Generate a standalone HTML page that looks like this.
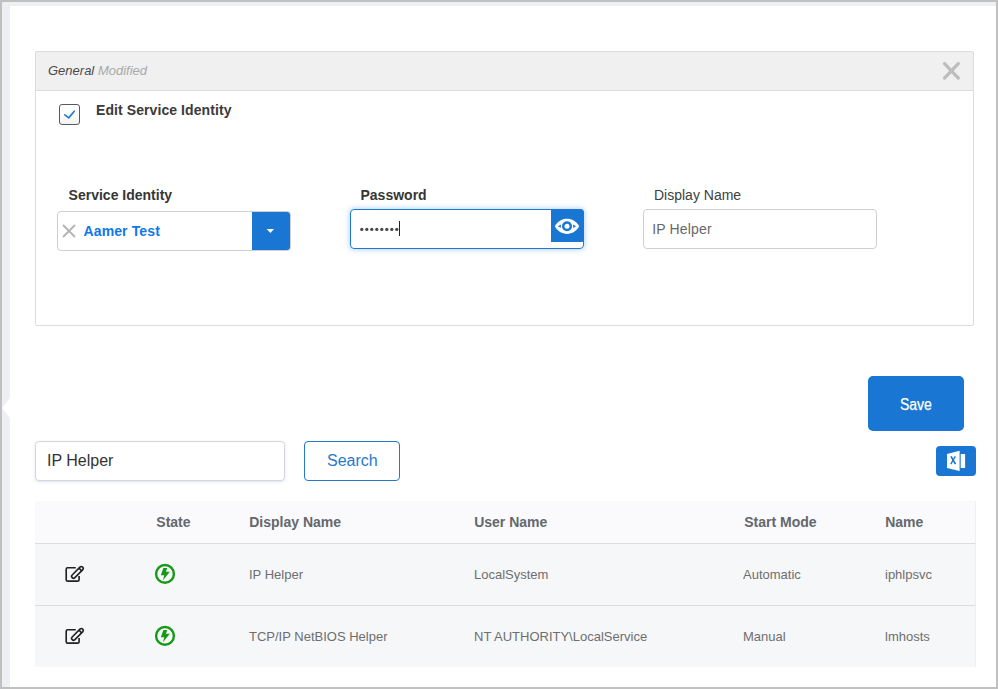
<!DOCTYPE html>
<html><head><meta charset="utf-8">
<style>
*{box-sizing:border-box;margin:0;padding:0}
html,body{width:998px;height:689px;overflow:hidden;background:#fff}
body{font-family:"Liberation Sans",sans-serif;position:relative}
.a{position:absolute}
.t{position:absolute;white-space:nowrap}
#frame{left:0;top:0;width:998px;height:689px;border:2px solid #c0c0c0}
#bandTop{left:2px;top:2px;width:994px;height:4px;background:#eeeff3}
#bandLeft{left:2px;top:2px;width:8px;height:685px;background:#eeeff3}
#panel{left:35px;top:51px;width:939px;height:275px;border:1px solid #dcdcdc;border-radius:2px}
#phead{left:35px;top:51px;width:939px;height:40px;background:#f0f0f0;border:1px solid #dcdcdc;border-radius:2px 2px 0 0}
#chk{left:59px;top:104px;width:21px;height:21px;border:1.3px solid #5a5a5a;border-radius:3px;background:linear-gradient(#fff 40%,#f2f2f2)}
.lbl{font-size:14px;line-height:14px;color:#333}
.inp{border:1px solid #cfcfcf;border-radius:4px;background:#fff}
#sel{left:57px;top:211px;width:234px;height:40px}
#selbtn{left:252px;top:212px;width:38px;height:38px;background:#1976d2;border-radius:0 3px 3px 0}
#pwd{left:350px;top:209px;width:234px;height:40px;border:1px solid #1f78d1;border-radius:4px;box-shadow:0 0 5px 1px rgba(60,140,230,.35)}
#eyebtn{left:551px;top:209px;width:33px;height:33px;background:#1976d2;border-radius:0 4px 2px 0}
#dname{left:643px;top:209px;width:234px;height:40px}
#save{left:868px;top:376px;width:96px;height:55px;background:#1976d2;border-radius:5px}
#xls{left:936px;top:446px;width:40px;height:30px;background:#1976d2;border-radius:4px}
#search{left:35px;top:441px;width:250px;height:40px;border:1px solid #d3d6dc;border-radius:4px;box-shadow:0 1px 3px rgba(120,140,190,.25)}
#sbtn{left:304px;top:441px;width:96px;height:40px;border:1px solid #2479cf;border-radius:4px}
#thead{left:35px;top:501px;width:941px;height:42px;background:#fafafc;border-right:1px solid #efeff2}
#rows{left:35px;top:543px;width:941px;height:124px;background:#f6f7f9;border-right:1px solid #ededf0}
.hl{left:35px;width:940px;height:1px;background:#dcdde0}
.th{font-size:14px;line-height:14px;font-weight:bold;color:#64676d}
.td{font-size:13px;line-height:13px;color:#6e6e6e}
</style></head><body>
<div class="a" id="frame"></div>
<div class="a" id="bandTop"></div>
<div class="a" id="bandLeft"></div>
<svg class="a" style="left:0;top:390px" width="12" height="36"><polygon points="10,8 2,18 10,28" fill="#fff"/></svg>

<div class="a" id="panel"></div>
<div class="a" id="phead"></div>
<div class="t" style="left:48px;top:63.8px;font-size:13px;line-height:13px;font-style:italic;color:#4a4a4a">General <span style="color:#a8a8a8">Modified</span></div>
<svg class="a" style="left:940px;top:59px" width="24" height="24"><path d="M4.5 4.6 L18.3 19.1 M18.3 4.6 L4.5 19.1" stroke="#bdbdbd" stroke-width="3.3" stroke-linecap="round"/></svg>

<div class="a" id="chk"></div>
<svg class="a" style="left:59px;top:104px" width="21" height="21"><path d="M5.9 10.9 L9.7 13.9 L15.3 7.2" fill="none" stroke="#2b7bd0" stroke-width="1.75" stroke-linecap="round" stroke-linejoin="round"/></svg>
<div class="t lbl" style="left:96px;top:103px;font-weight:bold;letter-spacing:0.08px;color:#3a3a3a">Edit Service Identity</div>

<div class="t lbl" style="left:68.6px;top:188px;font-weight:bold;color:#363636">Service Identity</div>
<div class="t lbl" style="left:360.5px;top:188px;font-weight:bold;color:#363636">Password</div>
<div class="t lbl" style="left:654px;top:188px;color:#404040">Display Name</div>

<div class="a inp" id="sel"></div>
<div class="a" id="selbtn"></div>
<svg class="a" style="left:61.5px;top:224.2px" width="14" height="14"><path d="M1 1 L13 13 M13 1 L1 13" stroke="#b3b3b3" stroke-width="1.8"/></svg>
<div class="t" style="left:83.5px;top:224px;font-size:14px;line-height:14px;font-weight:bold;color:#0d78ec;letter-spacing:0.12px">Aamer Test</div>
<svg class="a" style="left:262px;top:225px" width="16" height="12"><polygon points="4.7,4 12.1,4 8.4,7.9" fill="#fff"/></svg>

<div class="a" id="pwd"></div>
<div class="a" id="eyebtn"></div>
<svg class="a" style="left:352px;top:220px" width="48" height="20" fill="#4a4a4a"><circle cx="9.8" cy="9.4" r="1.65"/><circle cx="14.8" cy="9.4" r="1.65"/><circle cx="19.8" cy="9.4" r="1.65"/><circle cx="24.8" cy="9.4" r="1.65"/><circle cx="29.8" cy="9.4" r="1.65"/><circle cx="34.8" cy="9.4" r="1.65"/><circle cx="39.8" cy="9.4" r="1.65"/><circle cx="44.8" cy="9.4" r="1.65"/></svg>
<div class="a" style="left:399px;top:221px;width:1px;height:15px;background:#222"></div>
<svg class="a" style="left:551px;top:209px" width="33" height="33"><path d="M3.8000000000000007 17.3 C9 7.200000000000001 23 7.200000000000001 28.2 17.3 C23 27.4 9 27.4 3.8000000000000007 17.3 Z" fill="#fff"/><path d="M6.800000000000001 17.3 Q16 10.8 25.2 17.3 Q16 23.8 6.800000000000001 17.3 Z" fill="#1976d2"/><circle cx="16" cy="17.3" r="6.2" fill="#fff"/><circle cx="16" cy="17.3" r="5" fill="#1976d2"/><circle cx="16" cy="17.3" r="2.5" fill="#fff"/></svg>

<div class="a inp" id="dname"></div>
<div class="t" style="left:652.3px;top:222px;font-size:14px;line-height:14px;color:#686868;letter-spacing:0.15px">IP Helper</div>

<div class="a" id="save"></div>
<div class="t" style="left:899.5px;top:396.8px;font-size:16px;line-height:16px;color:#fff;transform:scaleX(0.875);transform-origin:0 0;-webkit-text-stroke:0.25px #fff">Save</div>

<div class="a" id="xls"></div>
<svg class="a" style="left:936px;top:446px" width="40" height="30"><polygon points="11,8 23.6,4.8 23.6,25 11,22" fill="#fff"/><rect x="24.7" y="8" width="4.4" height="14" fill="#fff"/><path d="M15 10.4 L19.5 18.2" stroke="#1976d2" stroke-width="1.7"/><path d="M19.3 10.4 L14.8 18.2" stroke="#1976d2" stroke-width="1.35"/></svg>

<div class="a" id="search"></div>
<div class="t" style="left:47px;top:453px;font-size:16px;line-height:16px;color:#333">IP Helper</div>
<div class="a" id="sbtn"></div>
<div class="t" style="left:327px;top:453px;font-size:16px;line-height:16px;color:#2679cc">Search</div>

<div class="a" id="thead"></div>
<div class="a" id="rows"></div>
<div class="a hl" style="top:543px"></div>
<div class="a hl" style="top:605px"></div>
<div class="t th" style="left:156.3px;top:514.5px">State</div>
<div class="t th" style="left:249.2px;top:514.5px">Display Name</div>
<div class="t th" style="left:474.2px;top:514.5px">User Name</div>
<div class="t th" style="left:744.2px;top:514.5px">Start Mode</div>
<div class="t th" style="left:885.2px;top:514.5px">Name</div>

<svg class="a" style="left:58px;top:558px" width="32" height="30"><path d="M17.8 9.75 H9.7 Q8.2 9.75 8.2 11.25 V21.65 Q8.2 23.15 9.7 23.15 H19.6 Q21.1 23.15 21.1 21.65 V18" fill="none" stroke="#222" stroke-width="1.65"/><g transform="translate(19.4 14.4) rotate(-45)" fill="none" stroke="#222" stroke-width="1.6"><rect x="-7.4" y="-1.9" width="14.8" height="3.8" rx="1.9"/><path d="M4.1 -1.9 V1.9"/></g></svg>
<svg class="a" style="left:154px;top:563px" width="22" height="22"><circle cx="11" cy="10.9" r="8.9" fill="none" stroke="#149a14" stroke-width="2.4"/><polygon points="9.4,4.9 13.2,4.9 11.9,8.8 15.8,8.8 9,17.2 10.2,12.2 6.8,12.2" fill="#149a14"/></svg>
<div class="t td" style="left:249px;top:568px">IP Helper</div>
<div class="t td" style="left:474px;top:568px">LocalSystem</div>
<div class="t td" style="left:743px;top:568px">Automatic</div>
<div class="t td" style="left:885px;top:568px">iphlpsvc</div>

<svg class="a" style="left:58px;top:620px" width="32" height="30"><path d="M17.8 9.75 H9.7 Q8.2 9.75 8.2 11.25 V21.65 Q8.2 23.15 9.7 23.15 H19.6 Q21.1 23.15 21.1 21.65 V18" fill="none" stroke="#222" stroke-width="1.65"/><g transform="translate(19.4 14.4) rotate(-45)" fill="none" stroke="#222" stroke-width="1.6"><rect x="-7.4" y="-1.9" width="14.8" height="3.8" rx="1.9"/><path d="M4.1 -1.9 V1.9"/></g></svg>
<svg class="a" style="left:154px;top:625px" width="22" height="22"><circle cx="11" cy="10.9" r="8.9" fill="none" stroke="#149a14" stroke-width="2.4"/><polygon points="9.4,4.9 13.2,4.9 11.9,8.8 15.8,8.8 9,17.2 10.2,12.2 6.8,12.2" fill="#149a14"/></svg>
<div class="t td" style="left:249px;top:630px">TCP/IP NetBIOS Helper</div>
<div class="t td" style="left:474px;top:630px">NT AUTHORITY\LocalService</div>
<div class="t td" style="left:743px;top:630px">Manual</div>
<div class="t td" style="left:885px;top:630px">lmhosts</div>
</body></html>
